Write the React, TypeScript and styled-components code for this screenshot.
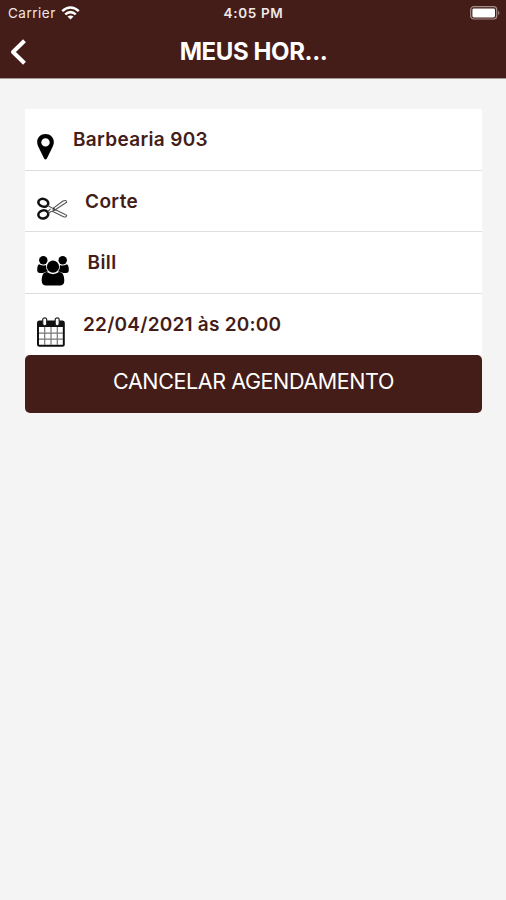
import React from "react";
import styled, { createGlobalStyle } from "styled-components";

const BROWN = "#441c18";

const GlobalStyle = createGlobalStyle`
  * { box-sizing: border-box; }
  body { margin: 0; background: #f4f4f4; font-family: Inter, "Liberation Sans", sans-serif; }
`;

const Screen = styled.main`
  min-height: 900px;
  background: #f4f4f4;
`;

const Header = styled.header`
  height: 79px;
  background: ${BROWN};
  border-bottom: 1px solid #a39896;
  color: #fff;
`;

const StatusBar = styled.div`
  height: 26px;
  display: grid;
  grid-template-columns: 1fr auto 1fr;
  align-items: center;
  padding: 0 5px 0 8px;
  font-size: 13.5px;
  line-height: 26px;
  color: #f0e8e7;
`;

const Carrier = styled.div`
  display: flex;
  align-items: center;
  gap: 5px;
  letter-spacing: 0.5px;
`;

const Clock = styled.time`
  font-weight: 600;
  font-size: 13.5px;
  letter-spacing: 0.65px;
  margin-right: 2px;
`;

const BatterySlot = styled.div`
  display: flex;
  justify-content: flex-end;
`;

const NavBar = styled.div`
  height: 52px;
  display: grid;
  grid-template-columns: 40px 1fr 40px;
  align-items: center;
`;

const BackButton = styled.button`
  display: flex;
  padding: 0 0 0 9px;
  border: 0;
  background: none;
  color: inherit;
`;

const Title = styled.h1`
  margin: 0;
  padding-left: 1px;
  text-align: center;
  font-size: 24px;
  font-weight: 700;
  line-height: 52px;
  letter-spacing: -0.4px;
`;

const Content = styled.section`
  padding: 30px 24px 0 25px;
`;

const List = styled.ul`
  margin: 0;
  padding: 0;
  list-style: none;
  background: #fff;
`;

const Row = styled.li<{ $height: number; $gap: number }>`
  height: ${(p) => p.$height}px;
  display: flex;
  align-items: flex-start;
  gap: ${(p) => p.$gap}px;
  padding: 18px 12px 0;
  border-bottom: 1px solid #dedede;
  &:last-child { border-bottom: 0; }
  svg { flex: none; margin-top: 5px; }
`;

const Label = styled.span<{ $spacing: number }>`
  font-size: 19px;
  line-height: 25px;
  font-weight: 600;
  color: ${BROWN};
  letter-spacing: ${(p) => p.$spacing}px;
`;

const CancelButton = styled.button`
  display: block;
  width: 100%;
  height: 58px;
  padding: 0 0 7px;
  border: 0;
  border-radius: 5px;
  background: ${BROWN};
  color: #fff;
  font-family: inherit;
  font-size: 21.5px;
  font-weight: 400;
  letter-spacing: -0.4px;
`;

const WifiIcon = () => (
  <svg width="19" height="14" viewBox="0 0 19 14" fill="none" stroke="#fff" strokeWidth="2.5">
    <path d="M1.2 5.1Q9.5 -2.2 17.8 5.1" />
    <path d="M4.2 8.4Q9.5 3.8 14.8 8.4" />
    <path d="M9.5 13.6L6.5 10.6Q9.5 8.2 12.5 10.6Z" fill="#fff" stroke="none" />
  </svg>
);

const BatteryIcon = () => (
  <svg width="31" height="14" viewBox="0 0 31 14">
    <rect x=".7" y=".7" width="26" height="12.3" rx="3" fill="none" stroke="#a58f8b" strokeWidth="1.2" />
    <rect x="2.4" y="2.4" width="22.6" height="9" rx="1.4" fill="#fff" />
    <path d="M28.2 4.6Q30.7 6.9 28.2 9.2Z" fill="#a58f8b" />
  </svg>
);

const BackIcon = () => (
  <svg width="18" height="28" viewBox="0 0 18 28" fill="none" stroke="#fff" strokeWidth="4">
    <path d="M15.5 2.7L4 14L15.5 25.3" strokeLinejoin="round" />
  </svg>
);

const PinIcon = () => (
  <svg width="17" height="28" viewBox="0 0 17 28">
    <path fillRule="evenodd" d="M8.5 2C3.8 2 .2 5.5 .2 10C.2 12 .8 13.6 1.6 15.2L7.1 26.5Q8.5 28.7 9.9 26.5L15.4 15.2C16.2 13.6 16.8 12 16.8 10C16.8 5.5 13.2 2 8.5 2ZM8.5 6.2A4.2 4.2 0 1 1 8.5 14.6A4.2 4.2 0 0 1 8.5 6.2Z" />
  </svg>
);

const ScissorsIcon = () => (
  <svg width="31" height="28" viewBox="0 0 31 28" fill="none" stroke="#111">
    <ellipse cx="6.3" cy="8.8" rx="5" ry="3.8" transform="rotate(18 6.3 8.8)" strokeWidth="2.5" />
    <ellipse cx="6.3" cy="20.4" rx="5" ry="4" transform="rotate(-18 6.3 20.4)" strokeWidth="2.5" />
    <path d="M10.5 11.4L16 14.4L26 7.1Q29.4 5.5 29.7 8.2L17.5 16.3L11 19M10.8 17.7L13.5 14.8M16 14.4L29.7 21.2Q29.4 24.1 26 22.4L15.3 17.2" strokeWidth="1.1" stroke="#555" />
    <circle cx="16.7" cy="15.2" r=".8" strokeWidth=".7" />
  </svg>
);

const PeopleIcon = () => (
  <svg width="32" height="31" viewBox="0 0 32 31">
    <circle cx="6.3" cy="5.2" r="4.2" />
    <circle cx="25.7" cy="5.2" r="4.2" />
    <path d="M2 9.2Q6 11.5 9 10Q8.8 14 11 16.4Q7.7 16.7 6 18H3Q0 18 .2 14.5Q.3 10 2 9.2Z" />
    <path d="M30 9.2Q26 11.5 23 10Q23.2 14 21 16.4Q24.3 16.7 26 18H29Q32 18 31.8 14.5Q31.7 10 30 9.2Z" />
    <circle cx="16" cy="11.7" r="6.1" />
    <path d="M10 17.1Q16 21.3 22 17.1C26 16.9 27.3 21.3 27.3 25.8Q27.3 30.5 22.7 30.5H9.3Q4.7 30.5 4.7 25.8C4.7 21.3 6 16.9 10 17.1Z" />
  </svg>
);

const CalendarIcon = () => (
  <svg width="28" height="31" viewBox="0 0 28 31">
    <rect x="1" y="4.5" width="25.8" height="24.2" rx="1.5" fill="#fff" stroke="#111" strokeWidth="2" />
    <path d="M1 4.2H27V10H1Z" fill="#111" />
    <path d="M7.7 10V28M14 10V28M20.3 10V28M2 16.2H26M2 22.2H26" stroke="#777" strokeWidth="1.2" />
    <rect x="5.7" y=".8" width="4" height="8" rx="2" fill="#fff" stroke="#222" strokeWidth="1.2" />
    <rect x="18.2" y=".8" width="4" height="8" rx="2" fill="#fff" stroke="#222" strokeWidth="1.2" />
  </svg>
);

const details = [
  { icon: <PinIcon />, text: "Barbearia 903", height: 62, gap: 19, spacing: 0.33 },
  { icon: <ScissorsIcon />, text: "Corte", height: 61, gap: 17, spacing: 0.4 },
  { icon: <PeopleIcon />, text: "Bill", height: 62, gap: 18.5, spacing: 0.4 },
  { icon: <CalendarIcon />, text: "22/04/2021 às 20:00", height: 61, gap: 18, spacing: 0.23 },
];

export default function App() {
  return (
    <Screen>
      <GlobalStyle />
      <Header>
        <StatusBar>
          <Carrier>Carrier <WifiIcon /></Carrier>
          <Clock>4:05 PM</Clock>
          <BatterySlot><BatteryIcon /></BatterySlot>
        </StatusBar>
        <NavBar>
          <BackButton aria-label="Voltar"><BackIcon /></BackButton>
          <Title>MEUS HOR...</Title>
        </NavBar>
      </Header>
      <Content>
        <List>
          {details.map((d) => (
            <Row key={d.text} $height={d.height} $gap={d.gap}>
              {d.icon}
              <Label $spacing={d.spacing}>{d.text}</Label>
            </Row>
          ))}
        </List>
        <CancelButton>CANCELAR AGENDAMENTO</CancelButton>
      </Content>
    </Screen>
  );
}
